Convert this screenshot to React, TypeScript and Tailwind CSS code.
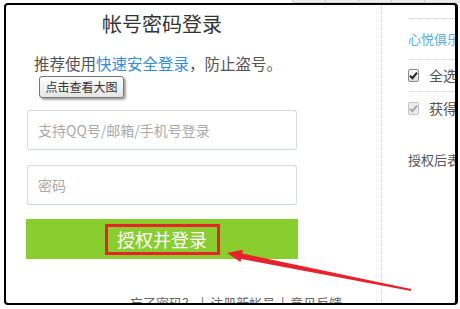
import React from 'react'

const font = { fontFamily: '"Noto Sans CJK SC", "Noto Sans", sans-serif' }

function Box({ on, dim }: { on?: boolean; dim?: boolean }) {
  return (
    <span className={`w-[13px] h-[13px] rounded-[2px] border flex items-center justify-center ${dim ? 'border-[#c4c4c4] bg-[#ececec]' : 'border-[#8a8a8a] bg-gradient-to-b from-[#fafafa] to-[#dcdcdc]'}`}>
      {on && (
        <svg width="9" height="9" viewBox="0 0 9 9">
          <path d="M1 4.8 L3.4 7.2 L8 1.6" fill="none" stroke={dim ? '#a8a8a8' : '#222'} strokeWidth="2" />
        </svg>
      )}
    </span>
  )
}

export default function App() {
  return (
    <div className="relative w-[460px] h-[309px] bg-white overflow-hidden" style={font}>
      <div className="h-[3px] ml-[292px] flex bg-[#ececec] border-b border-[#d8d8d8]">
        {[0,1,2,3,4].map(i=><div key={i} className="w-[33px] border-l border-[#c9c9c9]" />)}
      </div>
      <div className="ml-[4px] w-[454px] h-[302px] border-l-2 border-t-2 border-r-[3px] border-b-2 border-black rounded-[4px] overflow-hidden flex">
        <div className="w-[375px] shrink-0 pl-[21px]">
          <div className="w-[270px] mt-[5px] h-[28px] leading-[28px] text-center text-[20px] text-[#333]">帐号密码登录</div>
          <div className="ml-[7px] mt-[14px] h-[22px] leading-[22px] text-[15.5px] text-[#555] whitespace-nowrap">
            推荐使用<span className="text-[#2d8de0]">快速安全登录</span>，防止盗号。
          </div>
          <div className="mt-[36px] w-[270px] h-[40px] rounded-[3px] border border-[#dadada] border-b-[#c6d9e8] flex items-center pl-[10px] text-[14px] text-[#aaa]">支持QQ号/邮箱/手机号登录</div>
          <div className="mt-[15px] w-[270px] h-[40px] rounded-[3px] border border-[#dadada] border-b-[#c6d9e8] flex items-center pl-[10px] text-[14px] text-[#aaa]">密码</div>
          <div className="mt-[14px] -ml-[1px] w-[272px] h-[40px] bg-[#8acd2f] flex items-center justify-center">
            <span className="border-[3px] border-[#e8222b] w-[115px] h-[31px] flex items-center justify-center text-[18px] text-white leading-none">授权并登录</span>
          </div>
          <div className="mt-[35px] ml-[103px] text-[13px] text-[#666] whitespace-nowrap leading-[18px]">忘了密码？ &nbsp;| &nbsp;注册新帐号 &nbsp;| &nbsp;意见反馈</div>
        </div>
        <div className="flex-1 border-l border-dotted border-[#cfcfcf] pl-[26px] overflow-hidden">
          <div className="mt-[13px] border-t border-dotted border-[#cfcfcf]" />
          <div className="h-[40px] flex items-center text-[13px] text-[#55aee9] whitespace-nowrap">心悦俱乐部</div>
          <div className="border-t border-dotted border-[#cfcfcf]" />
          <div className="h-[31px] flex items-center gap-[10px] text-[14px] text-[#555] whitespace-nowrap"><Box on />全选</div>
          <div className="border-t border-dotted border-[#cfcfcf]" />
          <div className="h-[32px] flex items-center gap-[10px] text-[14px] text-[#555] whitespace-nowrap"><Box on dim />获得您的昵称</div>
          <div className="mt-[27px] text-[13px] text-[#555] whitespace-nowrap leading-[18px]">授权后表明你已同意</div>
        </div>
      </div>
      <div className="absolute left-[39px] top-[76px] w-[85px] h-[22px] rounded-[3px] border border-[#767676] bg-gradient-to-b from-[#fdfdfd] to-[#e6e6e6] shadow-[2px_2px_2px_rgba(0,0,0,0.35)] flex items-center justify-center text-[12px] text-[#333]">点击查看大图</div>
      <svg className="absolute left-0 top-0" width="460" height="309" viewBox="0 0 460 309">
        <polygon points="241,253.2 240,258.8 411,291 411,289" fill="#e8222b" />
        <polygon points="227,253 243,249.8 240.5,262" fill="#e8222b" />
      </svg>
    </div>
  )
}
